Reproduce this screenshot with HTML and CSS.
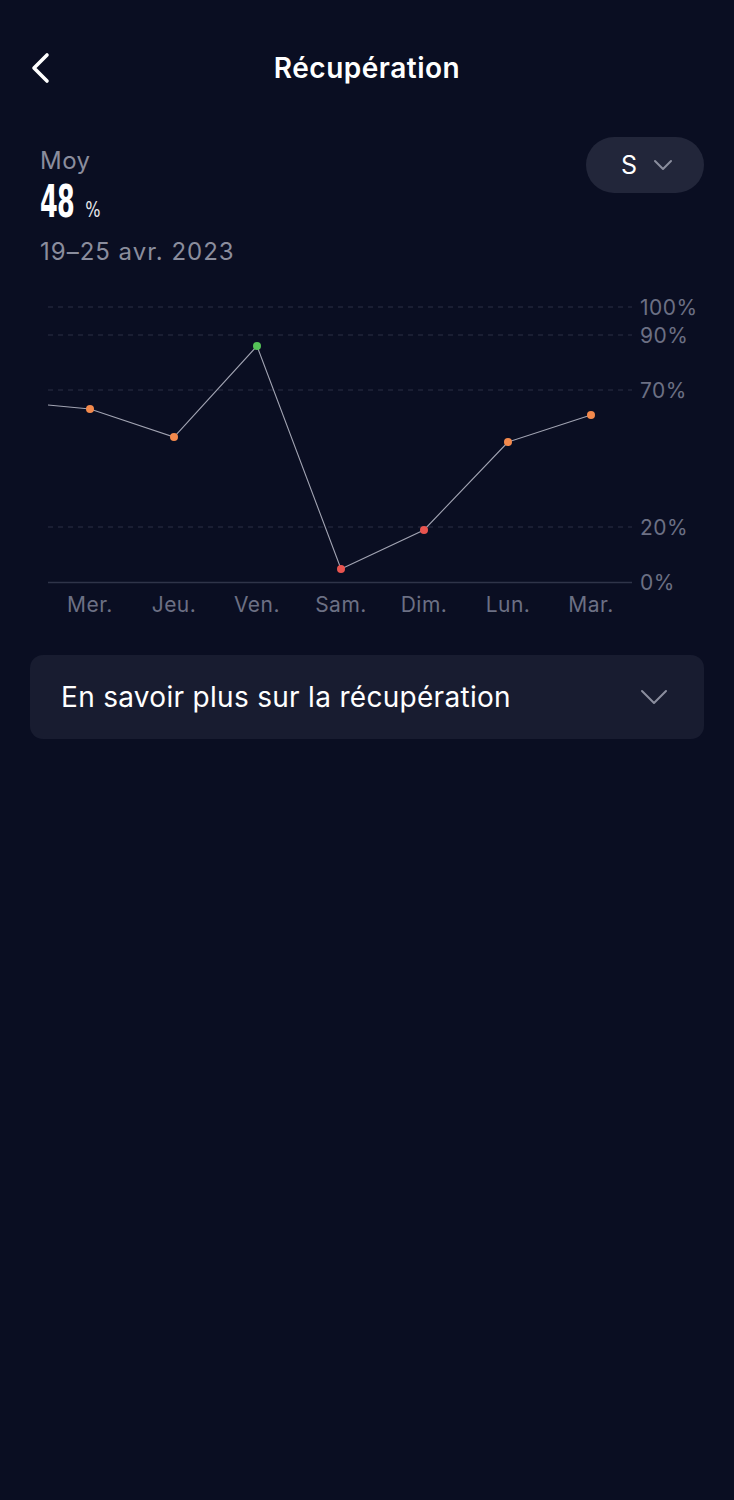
FILE: index.html
```html
<!DOCTYPE html>
<html lang="fr">
<head>
<meta charset="utf-8">
<title>Récupération</title>
<link rel="stylesheet" href="styles.css">
</head>
<body>
<div class="screen">
  <header class="topbar">
    <button class="back" aria-label="Retour">
      <svg width="24" height="32" viewBox="0 0 24 32"><path d="M19 3 L6 16 L19 29" fill="none" stroke="#ffffff" stroke-width="3.6" stroke-linecap="round" stroke-linejoin="round"/></svg>
    </button>
    <h1 class="title">Récupération</h1>
  </header>

  <section class="stats">
    <div class="stats-text">
      <div class="label">Moy</div>
      <div class="value"><span class="num">48</span><span class="unit">%</span></div>
      <div class="date">19–25 avr. 2023</div>
    </div>
    <button class="period">
      <span class="period-text">S</span>
      <svg width="20" height="12" viewBox="0 0 20 12"><path d="M2 2 L10 10 L18 2" fill="none" stroke="#8b8e9e" stroke-width="2" stroke-linecap="round" stroke-linejoin="round"/></svg>
    </button>
  </section>

  <svg class="chart" width="734" height="330" viewBox="0 290 734 330">
    <g stroke="#2b2f44" stroke-width="1" stroke-dasharray="5 5">
      <line x1="48" y1="307" x2="632" y2="307"/>
      <line x1="48" y1="335" x2="632" y2="335"/>
      <line x1="48" y1="390" x2="632" y2="390"/>
      <line x1="48" y1="527" x2="632" y2="527"/>
    </g>
    <line x1="48" y1="582.5" x2="632" y2="582.5" stroke="#2f3449" stroke-width="1.5"/>
    <g class="ylab">
      <text x="640" y="315">100%</text>
      <text x="640" y="343">90%</text>
      <text x="640" y="398">70%</text>
      <text x="640" y="535">20%</text>
      <text x="640" y="590">0%</text>
    </g>
    <polyline points="48,405 90,409 174,437 257,346 341,569 424,530 508,442 591,415" fill="none" stroke="#a2a4b3" stroke-width="1.1"/>
    <g>
      <circle cx="90" cy="409" r="4" fill="#f3894c"/>
      <circle cx="174" cy="437" r="4" fill="#f3894c"/>
      <circle cx="257" cy="346" r="4" fill="#55c257"/>
      <circle cx="341" cy="569" r="4" fill="#e9544f"/>
      <circle cx="424" cy="530" r="4" fill="#e9544f"/>
      <circle cx="508" cy="442" r="4" fill="#f3894c"/>
      <circle cx="591" cy="415" r="4" fill="#f3894c"/>
    </g>
    <g class="xlab" text-anchor="middle">
      <text x="90" y="612">Mer.</text>
      <text x="174" y="612">Jeu.</text>
      <text x="257" y="612">Ven.</text>
      <text x="341" y="612">Sam.</text>
      <text x="424" y="612">Dim.</text>
      <text x="508" y="612">Lun.</text>
      <text x="591" y="612">Mar.</text>
    </g>
  </svg>

  <div class="accordion">
    <span class="acc-text">En savoir plus sur la récupération</span>
    <svg width="28" height="16" viewBox="0 0 28 16"><path d="M2 2 L14 14 L26 2" fill="none" stroke="#8b8e9e" stroke-width="2" stroke-linecap="round" stroke-linejoin="round"/></svg>
  </div>
</div>
</body>
</html>
```

FILE: styles.css
```css
* { box-sizing: border-box; }
html, body {
  margin: 0;
  padding: 0;
  background: #0a0e22;
}
body {
  font-family: Inter, Roboto, "Liberation Sans", sans-serif;
  color: #ffffff;
}
.screen {
  width: 734px;
  min-height: 1500px;
  background: #0a0e22;
}
.topbar {
  position: relative;
  height: 136px;
  display: flex;
  align-items: center;
  justify-content: center;
}
.back {
  position: absolute;
  left: 28px;
  top: 52px;
  background: none;
  border: 0;
  padding: 0;
  width: 24px;
  height: 32px;
}
.back svg { display: block; }
.title {
  margin: 0;
  font-size: 28px;
  font-weight: 600;
  letter-spacing: 0.5px;
}
.stats {
  display: flex;
  justify-content: space-between;
  align-items: flex-start;
  padding: 1px 30px 0 40px;
}
.stats-text { padding-top: 9px; }
.label {
  font-size: 24px;
  line-height: 30px;
  letter-spacing: 0.5px;
  color: #8a8d9d;
}
.value {
  display: flex;
  align-items: baseline;
  height: 44px;
  line-height: 44px;
  margin-top: 4px;
}
.num {
  font-family: "Liberation Sans Narrow", "DejaVu Sans Condensed", sans-serif;
  font-weight: 700;
  font-size: 45px;
  letter-spacing: -1px;
  transform: scaleX(0.63);
  transform-origin: left center;
  display: inline-block;
  margin-right: -15px;
}
.unit {
  font-family: "Liberation Sans Narrow", "DejaVu Sans Condensed", sans-serif;
  font-size: 21px;
  color: #e6e7ec;
  margin-left: 5px;
  transform: scaleX(0.85);
  display: inline-block;
}
.date {
  margin-top: 13px;
  font-size: 24px;
  line-height: 30px;
  letter-spacing: 1px;
  color: #8a8d9d;
}
.period {
  width: 118px;
  height: 56px;
  border-radius: 28px;
  border: 0;
  background: #22263a;
  display: flex;
  align-items: center;
  justify-content: center;
  gap: 16px;
  padding: 0 0 0 4px;
  font-family: Inter, Roboto, "Liberation Sans", sans-serif;
}
.period-text {
  color: #ffffff;
  font-size: 25px;
}
.chart {
  display: block;
  margin-top: 23px;
  font-family: Inter, Roboto, "Liberation Sans", sans-serif;
}
.ylab, .xlab {
  font-size: 21px;
  letter-spacing: 0.5px;
  fill: #6c7084;
}
.accordion {
  margin: 35px 30px 0 30px;
  height: 84px;
  border-radius: 13px;
  background: #181c30;
  display: flex;
  align-items: center;
  justify-content: space-between;
  padding: 0 36px 0 31px;
}
.acc-text {
  font-size: 28px;
  letter-spacing: 0.3px;
  color: #ffffff;
}
```
